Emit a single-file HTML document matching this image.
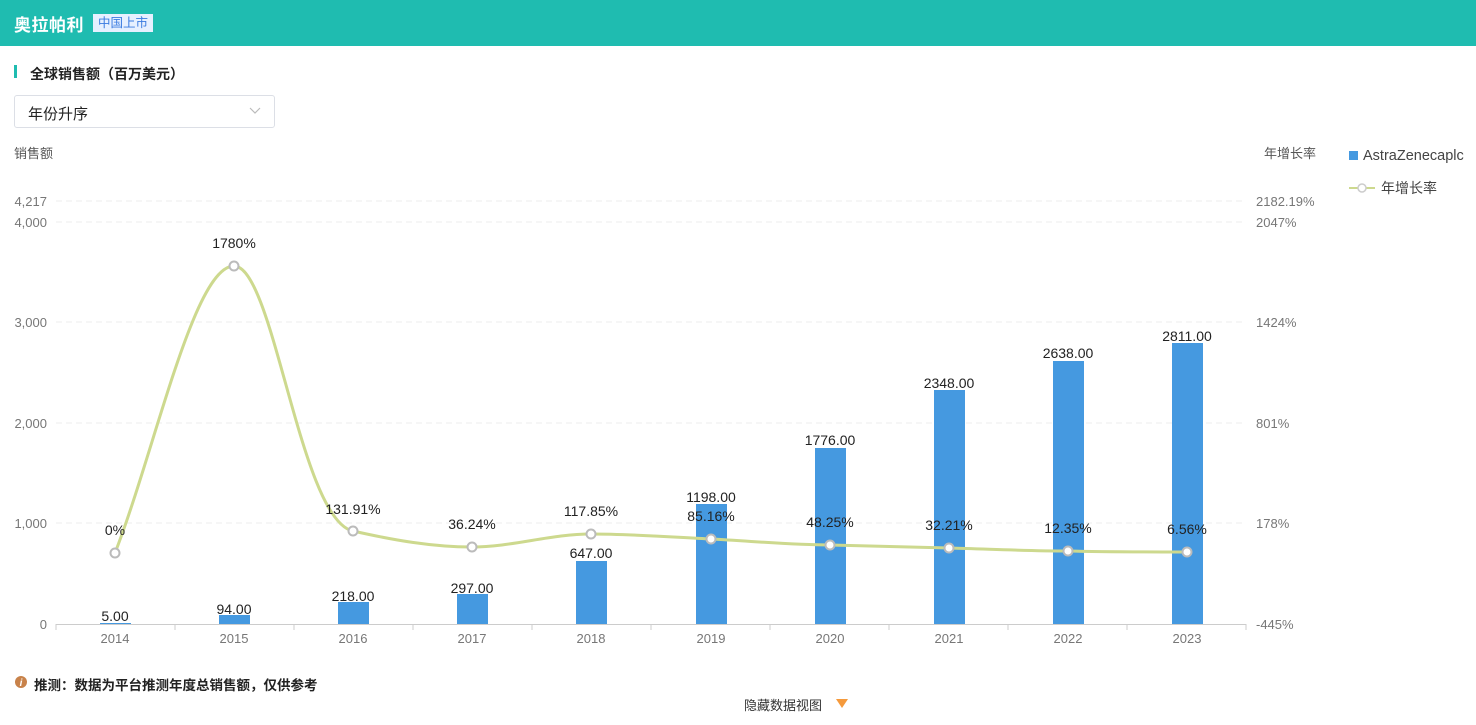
<!DOCTYPE html>
<html><head><meta charset="utf-8"><style>
body{margin:0;width:1476px;height:725px;background:#fff;font-family:"Liberation Sans","Noto Sans CJK SC",sans-serif;position:relative;overflow:hidden}
.hdr{position:absolute;left:0;top:0;width:1476px;height:46px;background:#1fbcb0}
.hdr .t{position:absolute;left:14px;top:11px;font-size:17px;font-weight:bold;color:#fff;letter-spacing:0.5px}
.hdr .tag{position:absolute;left:93px;top:14px;height:18px;line-height:18px;padding:0 5px;background:#e6f0ff;color:#3a7be0;font-size:12.5px}
.sec{position:absolute;left:14px;top:65px;width:3px;height:13px;background:#1fbcb0}
.sect{position:absolute;left:30px;top:64px;font-size:14px;font-weight:bold;color:#222}
.sel{position:absolute;left:14px;top:95px;width:261px;height:33px;border:1px solid #dcdfe6;border-radius:3px;box-sizing:border-box}
.sel span{position:absolute;left:13px;top:7px;font-size:15px;color:#222}
.foot{position:absolute;left:34px;top:674px;font-size:13.5px;font-weight:bold;color:#222}
.hide{position:absolute;left:744px;top:695px;font-size:13px;color:#333}
</style></head><body>
<div class="hdr"><div class="t">奥拉帕利</div><div class="tag">中国上市</div></div>
<div class="sec"></div><div class="sect">全球销售额（百万美元）</div>
<div class="sel"><span>年份升序</span><svg style="position:absolute;left:234px;top:11px" width="12" height="8"><path d="M1 1L6 6L11 1" fill="none" stroke="#bbb" stroke-width="1.2"/></svg></div>
<svg width="1476" height="725" style="position:absolute;left:0;top:0" font-family="Liberation Sans,Noto Sans CJK SC,sans-serif">
<g font-size="13" fill="#555"><text x="14" y="158">销售额</text><text x="1264" y="158">年增长率</text></g>
<g stroke="#eee" stroke-dasharray="6,4"><line x1="56" y1="201" x2="1246" y2="201"/><line x1="56" y1="222" x2="1246" y2="222"/><line x1="56" y1="322" x2="1246" y2="322"/><line x1="56" y1="423" x2="1246" y2="423"/><line x1="56" y1="523" x2="1246" y2="523"/></g>
<line x1="56" y1="624.5" x2="1246" y2="624.5" stroke="#ccc"/>
<g stroke="#ccc"><line x1="56" y1="624" x2="56" y2="630"/><line x1="175" y1="624" x2="175" y2="630"/><line x1="294" y1="624" x2="294" y2="630"/><line x1="413" y1="624" x2="413" y2="630"/><line x1="532" y1="624" x2="532" y2="630"/><line x1="651" y1="624" x2="651" y2="630"/><line x1="770" y1="624" x2="770" y2="630"/><line x1="889" y1="624" x2="889" y2="630"/><line x1="1008" y1="624" x2="1008" y2="630"/><line x1="1127" y1="624" x2="1127" y2="630"/><line x1="1246" y1="624" x2="1246" y2="630"/></g>
<g font-size="13" fill="#777" text-anchor="end"><text x="47" y="206">4,217</text><text x="47" y="227">4,000</text><text x="47" y="327">3,000</text><text x="47" y="428">2,000</text><text x="47" y="528">1,000</text><text x="47" y="629">0</text></g>
<g font-size="13" fill="#777"><text x="1256" y="206">2182.19%</text><text x="1256" y="227">2047%</text><text x="1256" y="327">1424%</text><text x="1256" y="428">801%</text><text x="1256" y="528">178%</text><text x="1256" y="629">-445%</text></g>
<g font-size="13" fill="#777" text-anchor="middle"><text x="115" y="643">2014</text><text x="234" y="643">2015</text><text x="353" y="643">2016</text><text x="472" y="643">2017</text><text x="591" y="643">2018</text><text x="711" y="643">2019</text><text x="830" y="643">2020</text><text x="949" y="643">2021</text><text x="1068" y="643">2022</text><text x="1187" y="643">2023</text></g>
<g fill="#4599e0"><rect x="100" y="623" width="31" height="1"/><rect x="219" y="615" width="31" height="9"/><rect x="338" y="602" width="31" height="22"/><rect x="457" y="594" width="31" height="30"/><rect x="576" y="561" width="31" height="63"/><rect x="696" y="504" width="31" height="120"/><rect x="815" y="448" width="31" height="176"/><rect x="934" y="390" width="31" height="234"/><rect x="1053" y="361" width="31" height="263"/><rect x="1172" y="343" width="31" height="281"/></g>
<g font-size="14" fill="#222" text-anchor="middle"><text x="115" y="621">5.00</text><text x="234" y="614">94.00</text><text x="353" y="601">218.00</text><text x="472" y="593">297.00</text><text x="591" y="558">647.00</text><text x="711" y="502">1198.00</text><text x="830" y="445">1776.00</text><text x="949" y="388">2348.00</text><text x="1068" y="358">2638.00</text><text x="1187" y="341">2811.00</text></g>
<path d="M115,553 C155,450 194,266 234,266 C274,266 300,520 353,531 C393,540 432,547 472,547 C512,547 551,534 591,534 C631,534 671,537 711,539 C751,541 790,545 830,545 C870,546 909,547 949,548 C989,549 1028,551 1068,551 C1108,552 1147,552 1187,552" fill="none" stroke="#cdd98e" stroke-width="3"/>
<g fill="#fff" stroke="#bbb" stroke-width="2"><circle cx="115" cy="553" r="4.5"/><circle cx="234" cy="266" r="4.5"/><circle cx="353" cy="531" r="4.5"/><circle cx="472" cy="547" r="4.5"/><circle cx="591" cy="534" r="4.5"/><circle cx="711" cy="539" r="4.5"/><circle cx="830" cy="545" r="4.5"/><circle cx="949" cy="548" r="4.5"/><circle cx="1068" cy="551" r="4.5"/><circle cx="1187" cy="552" r="4.5"/></g>
<g font-size="14" fill="#222" text-anchor="middle"><text x="115" y="535">0%</text><text x="234" y="248">1780%</text><text x="353" y="514">131.91%</text><text x="472" y="529">36.24%</text><text x="591" y="516">117.85%</text><text x="711" y="521">85.16%</text><text x="830" y="527">48.25%</text><text x="949" y="530">32.21%</text><text x="1068" y="533">12.35%</text><text x="1187" y="534">6.56%</text></g>
<rect x="1349" y="151" width="9" height="9" fill="#4599e0"/><text x="1363" y="160" font-size="14.5" fill="#444">AstraZenecaplc</text>
<line x1="1349" y1="188" x2="1375" y2="188" stroke="#cdd98e" stroke-width="2"/><circle cx="1362" cy="188" r="4" fill="#fff" stroke="#ccc" stroke-width="1.5"/><text x="1381" y="193" font-size="14" fill="#444">年增长率</text>
<circle cx="21" cy="682" r="6" fill="#c8824a"/><text x="21" y="686" font-size="10" fill="#fff" text-anchor="middle" font-style="italic" font-weight="bold">i</text>
<path d="M836 699L848 699L842 708Z" fill="#f59a3c"/>
</svg>
<div class="foot">推测：数据为平台推测年度总销售额，仅供参考</div>
<div class="hide">隐藏数据视图</div>
</body></html>
